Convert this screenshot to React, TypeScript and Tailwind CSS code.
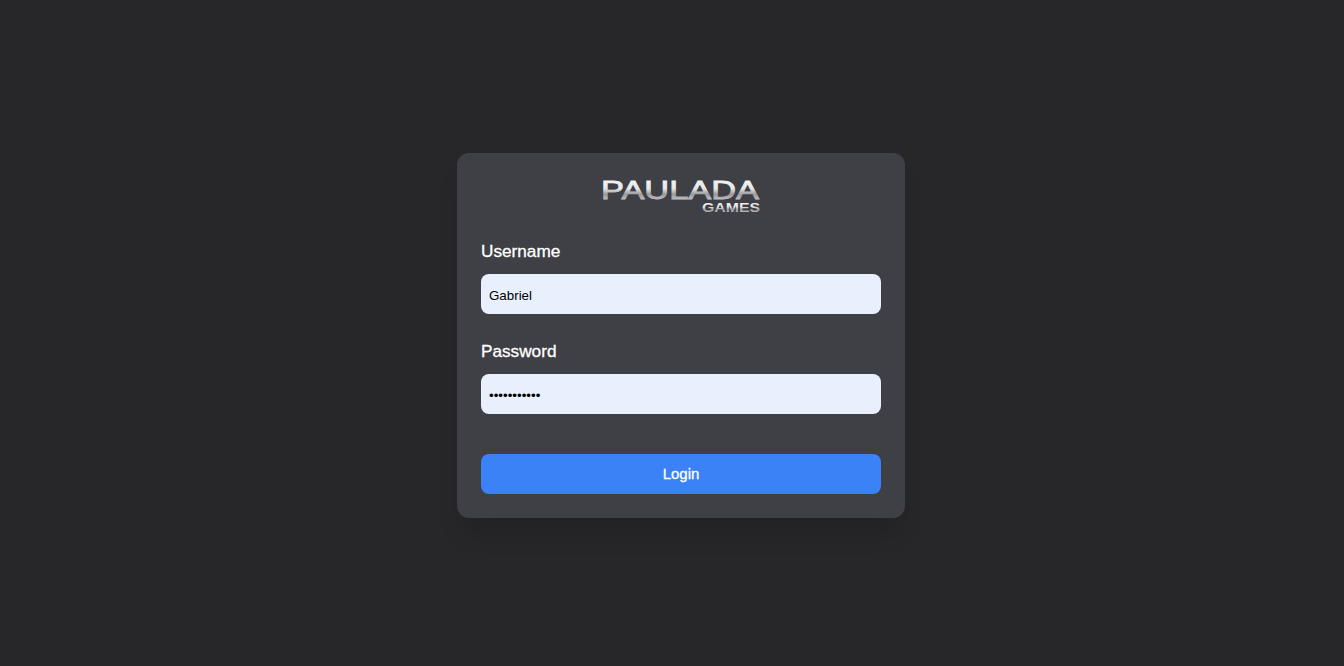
import React from "react";

const Logo = () => (
  <svg width="160" height="36" viewBox="0 0 160 36" className="block overflow-visible">
    <defs>
      <linearGradient id="chrome" x1="0" y1="0" x2="0" y2="1">
        <stop offset="0" stopColor="#f6f6f6" />
        <stop offset="0.45" stopColor="#e8e8e9" />
        <stop offset="0.65" stopColor="#9a9a9d" />
        <stop offset="1" stopColor="#e0e0e2" />
      </linearGradient>
    </defs>
    <text
      x="0"
      y="20"
      textLength="158"
      lengthAdjust="spacingAndGlyphs"
      fontFamily="'Liberation Sans', sans-serif"
      fontSize="25"
      fill="url(#chrome)"
      stroke="url(#chrome)"
      strokeWidth="0.8"
    >
      PAULADA
    </text>
    <text
      x="101"
      y="33"
      textLength="58"
      lengthAdjust="spacingAndGlyphs"
      fontFamily="'Liberation Sans', sans-serif"
      fontSize="13"
      fontWeight="700"
      fill="url(#chrome)"
    >
      GAMES
    </text>
  </svg>
);

export default function App() {
  return (
    <div className="min-h-screen w-full bg-[#27272a] flex items-center justify-center pl-[18px] pt-[5px] font-['Liberation_Sans',sans-serif]">
      <div className="w-[448px] bg-[#3f3f46] rounded-xl p-6 shadow-[0_20px_25px_-5px_rgb(0_0_0/0.12)]">
        <div className="flex justify-center mb-[23px] mt-[2px]">
          <Logo />
        </div>
        <div className="mb-6">
          <label className="block text-white text-[17.2px] [-webkit-text-stroke:0.3px_white] leading-[26px] mb-[10px]">
            Username
          </label>
          <input
            readOnly
            value="Gabriel"
            className="block w-full h-10 px-2 pt-[2px] rounded-lg bg-[#e8f0fe] text-black text-[13.33px] outline-none"
          />
        </div>
        <div className="mb-10">
          <label className="block text-white text-[17.2px] [-webkit-text-stroke:0.3px_white] leading-[26px] mb-[10px]">
            Password
          </label>
          <input
            readOnly
            type="password"
            value="gabriel1234"
            className="block w-full h-10 px-2 pt-[2px] rounded-lg bg-[#e8f0fe] text-black text-[13.33px] outline-none"
          />
        </div>
        <button className="block w-full h-10 rounded-lg bg-[#3b82f6] text-white text-[15px] [-webkit-text-stroke:0.3px_white]">
          Login
        </button>
      </div>
    </div>
  );
}
